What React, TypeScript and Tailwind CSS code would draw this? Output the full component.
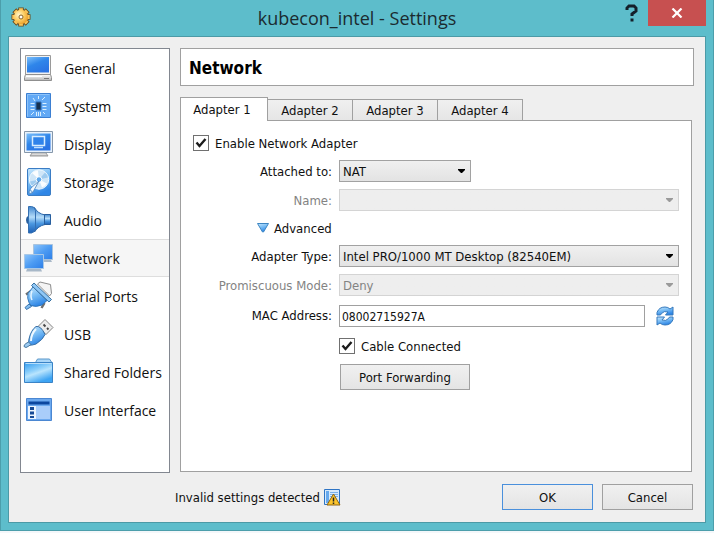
import { useState } from "react";
import type { ReactNode } from "react";

function Gradients() {
  return (
    <svg width="0" height="0" className="absolute" aria-hidden="true">
      <defs>
        <linearGradient id="screen" x1="0" y1="0" x2="0.6" y2="1">
          <stop offset="0" stopColor="#7cc0fb" />
          <stop offset="0.5" stopColor="#2f86ea" />
          <stop offset="1" stopColor="#2a74e4" />
        </linearGradient>
        <linearGradient id="sky" x1="0" y1="0" x2="0.4" y2="1">
          <stop offset="0" stopColor="#c9e8fd" />
          <stop offset="0.5" stopColor="#79bdf5" />
          <stop offset="1" stopColor="#2f86e6" />
        </linearGradient>
        <linearGradient id="folder" x1="0" y1="0" x2="0.5" y2="1">
          <stop offset="0" stopColor="#2f9bf0" />
          <stop offset="0.45" stopColor="#8ed0fb" />
          <stop offset="0.6" stopColor="#b9e4fd" />
          <stop offset="1" stopColor="#3da4f3" />
        </linearGradient>
        <linearGradient id="net" x1="0" y1="0" x2="1" y2="1">
          <stop offset="0" stopColor="#8cc4fb" />
          <stop offset="0.5" stopColor="#4d9cf3" />
          <stop offset="1" stopColor="#2c7ee8" />
        </linearGradient>
        <linearGradient id="cone" x1="0" y1="0" x2="0" y2="1">
          <stop offset="0" stopColor="#3f86cf" />
          <stop offset="0.4" stopColor="#b5dcf9" />
          <stop offset="0.65" stopColor="#4a97e0" />
          <stop offset="1" stopColor="#1d5fb4" />
        </linearGradient>
        <linearGradient id="metal" x1="0" y1="0" x2="0" y2="1">
          <stop offset="0" stopColor="#ffffff" />
          <stop offset="1" stopColor="#b4b4b4" />
        </linearGradient>
        <radialGradient id="gold" cx="0.35" cy="0.35" r="0.75">
          <stop offset="0" stopColor="#fff6cc" />
          <stop offset="0.5" stopColor="#fdcd62" />
          <stop offset="1" stopColor="#e8961f" />
        </radialGradient>
      </defs>
    </svg>
  );
}

function Icon({ children }: { children: ReactNode }) {
  return (
    <svg width="32" height="32" viewBox="0 0 32 32" className="shrink-0" aria-hidden="true">
      {children}
    </svg>
  );
}

const GeneralIcon = () => (
  <Icon>
    <path d="M3.500 3.500h25v19h-25z" fill="#f2f2f2" stroke="#9a9a9a" />
    <path d="M5 5h22v15.500h-22z" fill="url(#screen)" />
    <path d="M3.500 22.500h25l1 3v3h-27v-3z" fill="url(#metal)" stroke="#8f8f8f" />
    <path d="M4 24.500h16" stroke="#fff" />
    <path d="M22 26.500h5" stroke="#777" />
  </Icon>
);

const SystemIcon = () => (
  <Icon>
    <path d="M4.500 3.500h24v24h-24z" fill="#62a9f5" stroke="#3b7fd2" />
    <path d="M5.500 26.500v-22h22" fill="none" stroke="#8dc3fa" />
    <path d="M14 12h5v8h-5z" fill="#16304f" stroke="#2f6cb5" />
    <path
      d="M8.500 13.500h4M8.500 16.500h4M8.500 19.500h4M20.500 13.500h4M20.500 16.500h4M20.500 19.500h4M16.500 6v3M14.500 22v4M16.500 22v4M18.500 22v4M11 8l2 3M23 7l-3 3M9 25l3-3M23 24l-2-2"
      stroke="#d9efff"
    />
  </Icon>
);

const DisplayIcon = () => (
  <Icon>
    <path d="M10 25h14l2 3h-18z" fill="url(#metal)" stroke="#999" />
    <path d="M2.500 3.500h28v21h-28z" fill="#e9f2fb" stroke="#8597aa" />
    <path d="M4.500 5.500h24v17h-24z" fill="url(#screen)" />
    <path d="M10.500 8.500h12v9h-12z" fill="#2f83ea" stroke="#d8edff" strokeWidth="1.500" />
    <path d="M12 19.500h9" stroke="#bfe0ff" strokeWidth="1.500" />
  </Icon>
);

const StorageIcon = () => (
  <Icon>
    <rect x="5.500" y="2.500" width="23" height="27" rx="1.500" fill="url(#sky)" stroke="#3a7cc4" />
    <circle cx="17" cy="13.500" r="9.700" fill="#cfe6f8" stroke="#eef8ff" />
    <path d="M17 13.500L10 7a9 9 0 0 1 6-2.500zM17 13.500l8 4a9 9 0 0 1-5 4z" fill="#fff" opacity="0.900" />
    <path d="M17 13.500l6-7a9 9 0 0 1 3 5zM17 13.500l-9 2a9 9 0 0 0 2 4z" fill="#9fcbef" />
    <circle cx="17" cy="13.500" r="2.800" fill="#5fa9ec" stroke="#fff" />
    <path d="M17 15l-6 11-3 2-1-2 2-4z" fill="#f7fbff" stroke="#4781bd" strokeWidth="0.800" />
    <circle cx="8.500" cy="26" r="1.500" fill="#d6ebfb" stroke="#4781bd" strokeWidth="0.700" />
  </Icon>
);

const AudioIcon = () => (
  <Icon>
    <path d="M6 12q-2 1-2 4t2 4z" fill="#285f9e" />
    <path d="M12.500 3.500q3 6 10.500 7.500v9.500q-7 1.500-10.500 7.500z" fill="url(#cone)" stroke="#2a66aa" />
    <path d="M6.500 2.500h3q3 0 4 4v18q-1 4-4 4.500h-3z" fill="url(#cone)" stroke="#3570b2" />
    <path d="M22.500 10.500h6v10h-6z" fill="url(#cone)" stroke="#285f9e" />
  </Icon>
);

const NetworkIcon = () => (
  <Icon>
    <path d="M15 18h14l1 2h-14z" fill="#a8b8c8" />
    <path d="M11.500 2.500h19v15h-19z" fill="url(#net)" stroke="#a9c3dd" />
    <path d="M5 27h14l1 2.500h-16z" fill="#a8b8c8" />
    <path d="M2.500 12.500h19v14h-19z" fill="url(#net)" stroke="#a9c8e6" />
  </Icon>
);

const SerialIcon = () => (
  <Icon>
    <path d="M15.500 4l2.500-2 10.500 2.500 1 9-2 2.500z" fill="#f4f4f4" stroke="#8c8c8c" />
    <path d="M4 14.500l5-3.500M19.500 28l3-5" stroke="#6f6f6f" strokeWidth="2.400" />
    <path d="M7 24l-4 3.500 1.500 2 5-3z" fill="#81bcf0" stroke="#3a74ad" />
    <path d="M11 7l14 13.500-5 4.500q-6 2.500-11 .5l-2-3q-2-4-1-9z" fill="url(#sky)" stroke="#2f74b8" />
    <path d="M9.500 5.500l2.500-2.500 17.500 16.500-2.500 2.500z" fill="#8fc7f6" stroke="#39709f" />
    <path d="M10 11q-2 5 0 9" fill="none" stroke="#e5f5ff" strokeWidth="1.500" />
  </Icon>
);

const UsbIcon = () => (
  <Icon>
    <path d="M23 1.500l8 8-7 7-8-8z" fill="#ececec" stroke="#858585" />
    <path d="M21.500 6.500l2 2M25 10l1.500 1.500" stroke="#444" strokeWidth="1.800" />
    <path d="M14 8.500q5-1 9 8-2 5-9 9.500-4 1.500-7 1-1-1 0-6 2-9 7-12.500z" fill="url(#sky)" stroke="#376fa6" />
    <path d="M6.500 24l2.500 2.500-3 2q-2 2-4 0 0-2 2-3z" fill="#9bcbf3" stroke="#4a789f" />
    <path d="M14 11q-5 5-5 12" fill="none" stroke="#eff9ff" strokeWidth="2" />
  </Icon>
);

const FolderIcon = () => (
  <Icon>
    <path d="M13.500 6.500l2-3.500h12l2 3v4h-16z" fill="#a9d6f8" stroke="#5b97c9" />
    <path d="M2.500 6.500h28v20h-28z" fill="url(#folder)" stroke="#3a83c6" />
    <path d="M3.500 7.500h26" stroke="#b8dffb" />
  </Icon>
);

const InterfaceIcon = () => (
  <Icon>
    <path d="M4.500 4.500h25v22h-25z" fill="#6ca9ef" stroke="#4b87d2" />
    <path d="M6.500 7.500h21v3h-21z" fill="#0c479f" />
    <path d="M6 12h22v13h-22z" fill="#a9cdfa" />
    <path d="M6 12h8v13h-8z" fill="#edf5fe" />
    <path d="M8 13h4v3h-4zM8 17.500h4v3h-4zM8 22h4v2h-4z" fill="#174b96" />
  </Icon>
);

const categories = [
  { name: "General", icon: GeneralIcon },
  { name: "System", icon: SystemIcon },
  { name: "Display", icon: DisplayIcon },
  { name: "Storage", icon: StorageIcon },
  { name: "Audio", icon: AudioIcon },
  { name: "Network", icon: NetworkIcon },
  { name: "Serial Ports", icon: SerialIcon },
  { name: "USB", icon: UsbIcon },
  { name: "Shared Folders", icon: FolderIcon },
  { name: "User Interface", icon: InterfaceIcon },
];

function GearIcon() {
  return (
    <svg width="20" height="20" viewBox="0 0 20 20" aria-hidden="true">
      <g stroke="#6d4a1c" strokeWidth="5.500">
        <path d="M10 0.500v19M0.500 10h19M3.300 3.300l13.400 13.400M16.700 3.300L3.300 16.700" />
      </g>
      <circle cx="10" cy="10" r="8" fill="#6d4a1c" />
      <g stroke="#f9c75c" strokeWidth="3.800">
        <path d="M10 1.300v17.400M1.300 10h17.400M3.900 3.900l12.200 12.200M16.100 3.900L3.900 16.100" />
      </g>
      <circle cx="10" cy="10" r="7.200" fill="url(#gold)" />
      <circle cx="10" cy="10" r="2" fill="#fff" stroke="#8a6224" />
    </svg>
  );
}

function RefreshIcon() {
  return (
    <svg width="18" height="20" viewBox="0 0 18 20" aria-hidden="true">
      <path
        d="M1 9V6.500q2-5.500 8-5.500 3 0 5 2l3-2v8H9.500l2.500-3q-4-1.500-6.500 1.500L4.500 9z"
        fill="url(#sky)"
        stroke="#3479bd"
        strokeLinejoin="round"
      />
      <path
        d="M17 11v2.500q-2 5.500-8 5.500-3 0-5-2l-3 2v-8h7.500l-2.500 3q4 1.500 6.500-1.500l1-1.500z"
        fill="url(#sky)"
        stroke="#3479bd"
        strokeLinejoin="round"
      />
    </svg>
  );
}

function WarningIcon() {
  return (
    <svg width="17" height="17" viewBox="0 0 17 17" aria-hidden="true">
      <path d="M0.500 0.500h15v15h-15z" fill="#d6e9fb" stroke="#2e74c4" />
      <path d="M2 2h3v12H2z" fill="#66a8ec" />
      <path d="M6 3.500h8M6 5.500h8M6 7.500h8" stroke="#78b0ea" />
      <path d="M9.500 5l6.500 11h-13z" fill="#fcc52c" stroke="#8f6510" strokeLinejoin="round" />
      <path d="M9.500 8.500v4M9.500 13.500v1.500" stroke="#222" strokeWidth="1.500" />
    </svg>
  );
}

function Check({ id, label }: { id: string; label: string }) {
  return (
    <div className="flex h-4 items-center gap-1.5">
      <span className="relative flex size-4">
        <input
          id={id}
          type="checkbox"
          defaultChecked
          className="peer size-4 appearance-none border border-[#707070] bg-white"
        />
        <svg
          viewBox="0 0 16 16"
          className="pointer-events-none absolute inset-0 hidden size-4 peer-checked:block"
          aria-hidden="true"
        >
          <path d="M3.500 7.500L6.500 11l6-7" fill="none" stroke="#1c1c1c" strokeWidth="2.400" />
        </svg>
      </span>
      <label htmlFor={id} className="pt-0.5">
        {label}
      </label>
    </div>
  );
}

interface DropdownProps {
  id: string;
  options: string[];
  disabled?: boolean;
  narrow?: boolean;
}

function Dropdown({ id, options, disabled, narrow }: DropdownProps) {
  return (
    <div className={narrow ? "relative w-[132px]" : "relative w-full"}>
      <select
        id={id}
        disabled={disabled}
        className="block h-[22px] w-full appearance-none border border-[#a2a2a2] bg-linear-to-b from-[#f0f0f0] to-[#e3e3e3] pt-0.5 pr-5 pl-[3px] disabled:border-[#d4d4d4] disabled:from-[#eeeeee] disabled:to-[#eeeeee] disabled:text-[#838383] disabled:opacity-100"
      >
        {options.map((option) => (
          <option key={option}>{option}</option>
        ))}
      </select>
      <svg
        width="9"
        height="4"
        viewBox="0 0 9 4"
        className="pointer-events-none absolute top-[9px] right-[5px]"
        aria-hidden="true"
      >
        <path d="M1 0h7v1L5 4H4L1 1z" fill={disabled ? "#9a9a9a" : "#000"} />
      </svg>
    </div>
  );
}

function FieldLabel({ htmlFor, muted, children }: { htmlFor: string; muted?: boolean; children: ReactNode }) {
  return (
    <label
      htmlFor={htmlFor}
      className={
        muted ? "pt-0.5 text-right whitespace-nowrap text-[#838383]" : "pt-0.5 text-right whitespace-nowrap"
      }
    >
      {children}
    </label>
  );
}

const buttonStyle = "border bg-linear-to-b from-[#f0f0f0] to-[#e4e4e4] h-[26px] pt-0.5";

export default function App() {
  const [category, setCategory] = useState("Network");
  const [tab, setTab] = useState(1);

  return (
    <div className="flex min-h-screen flex-col bg-[#f4f7fa] pb-0.5 font-['DejaVu_Sans_Condensed','DejaVu_Sans',sans-serif] text-[13px] leading-4 text-[#101010]">
      <Gradients />
      <div className="flex flex-1 flex-col border border-t-0 border-[#4c9eab] bg-[#5dbdcb] px-[7px] pb-[7px]">
        <header className="grid h-9 grid-cols-[1fr_auto_1fr] items-start">
          <div className="pt-[7px] pl-[3px]">
            <GearIcon />
          </div>
          <h1 className="pt-1.5 font-['Open_Sans','Noto_Sans',sans-serif] text-[18px] leading-6 text-[#1b2b30]">
            kubecon_intel - Settings
          </h1>
          <div className="flex justify-end gap-2.5">
            <button aria-label="Help" className="flex h-[26px] items-center">
              <svg width="13" height="18" viewBox="0 0 13 18" aria-hidden="true">
                <path d="M2 6V4l2-2h5l2 2v3L7 10v2" fill="none" stroke="#14202b" strokeWidth="3" />
                <path d="M5.500 14.500h3v3h-3z" fill="#14202b" />
              </svg>
            </button>
            <button aria-label="Close" className="flex h-[26px] w-[58px] items-center justify-center bg-[#c75050]">
              <svg width="12" height="10" viewBox="0 0 12 10" aria-hidden="true">
                <path d="M1.500 0.500l9 9M10.500 0.500l-9 9" stroke="#fff" strokeWidth="2.200" />
              </svg>
            </button>
          </div>
        </header>

        <main className="flex flex-1 flex-col border border-[#4c9aa6] bg-[#efefef] px-[11px] pt-[11px] pb-[11px]">
          <div className="flex flex-1 gap-2.5">
            <nav className="w-[150px] shrink-0 border border-[#828790] bg-white font-['Open_Sans','Noto_Sans',sans-serif] text-[14px] leading-5">
              <ul>
                {categories.map(({ name, icon: CategoryIcon }) => (
                  <li key={name}>
                    <button
                      onClick={() => setCategory(name)}
                      className={
                        name === category
                          ? "flex h-[38px] w-full items-center gap-2.5 border-y border-[#dedede] bg-[#f6f6f6] pl-px whitespace-nowrap"
                          : "flex h-[38px] w-full items-center gap-2.5 border-y border-transparent pl-px whitespace-nowrap"
                      }
                    >
                      <CategoryIcon />
                      <span className="pt-0.5">{name}</span>
                    </button>
                  </li>
                ))}
              </ul>
            </nav>

            <section className="flex min-w-0 flex-1 flex-col pb-px">
              <h2 className="mb-[11px] flex h-[38px] items-center border border-[#a0a0a0] bg-white px-2 pt-0.5 text-[17px] font-bold text-black">
                Network
              </h2>
              <div role="tablist" className="flex items-end">
                {[1, 2, 3, 4].map((n) => (
                  <button
                    key={n}
                    role="tab"
                    aria-selected={tab === n}
                    onClick={() => setTab(n)}
                    className={
                      tab === n
                        ? "relative -mb-px h-6 w-[88px] border border-b-0 border-[#a0a0a0] bg-white pr-1"
                        : "h-[21px] w-[85px] border border-b-0 border-l-0 border-[#a0a0a0] bg-linear-to-b from-[#f0f0f0] to-[#e6e6e6] pt-0.5"
                    }
                  >
                    Adapter {n}
                  </button>
                ))}
              </div>
              <div role="tabpanel" className="mr-0.5 flex-1 border border-[#a0a0a0] bg-white pt-3.5 pr-3 pl-3">
                <Check id="enable" label="Enable Network Adapter" />
                <div className="mt-[9px] grid grid-cols-[139px_1fr] items-center gap-x-[7px] gap-y-[7px]">
                  <FieldLabel htmlFor="attached">Attached to:</FieldLabel>
                  <Dropdown id="attached" options={["NAT"]} narrow />

                  <FieldLabel htmlFor="name" muted>
                    Name:
                  </FieldLabel>
                  <Dropdown id="name" options={[""]} disabled />

                  <button className="col-span-2 flex h-5 items-center gap-[5px] pl-16">
                    <svg width="12" height="10" viewBox="0 0 12 10" aria-hidden="true">
                      <path
                        d="M0.500 0.500h11L6.500 9h-1z"
                        fill="url(#sky)"
                        stroke="#3d86c2"
                        strokeLinejoin="round"
                      />
                    </svg>
                    <span className="pt-0.5">Advanced</span>
                  </button>

                  <FieldLabel htmlFor="type">Adapter Type:</FieldLabel>
                  <Dropdown id="type" options={["Intel PRO/1000 MT Desktop (82540EM)"]} />

                  <FieldLabel htmlFor="mode" muted>
                    Promiscuous Mode:
                  </FieldLabel>
                  <Dropdown id="mode" options={["Deny"]} disabled />

                  <FieldLabel htmlFor="mac">MAC Address:</FieldLabel>
                  <div className="flex items-center gap-[11px] pt-0.5 pr-[5px]">
                    <input
                      id="mac"
                      type="text"
                      defaultValue="08002715927A"
                      className="h-[22px] min-w-0 flex-1 border border-[#a0a0a0] bg-white px-0.5 pt-0.5 text-[12px]"
                    />
                    <button aria-label="Generate new MAC address">
                      <RefreshIcon />
                    </button>
                  </div>

                  <div className="col-start-2 flex h-[23px] items-center">
                    <Check id="cable" label="Cable Connected" />
                  </div>

                  <button className={`${buttonStyle} col-start-2 ml-px w-[130px] border-[#a0a0a0]`}>
                    Port Forwarding
                  </button>
                </div>
              </div>
            </section>
          </div>

          <footer className="mt-[11px] flex items-center gap-[9px] pr-px pb-px pl-[155px]">
            <p className="flex flex-1 items-center gap-1">
              <span className="pt-0.5">Invalid settings detected</span>
              <WarningIcon />
            </p>
            <button className={`${buttonStyle} w-[91px] border-[#4a90dc]`}>OK</button>
            <button className={`${buttonStyle} w-[91px] border-[#a0a0a0]`}>Cancel</button>
          </footer>
        </main>
      </div>
    </div>
  );
}
